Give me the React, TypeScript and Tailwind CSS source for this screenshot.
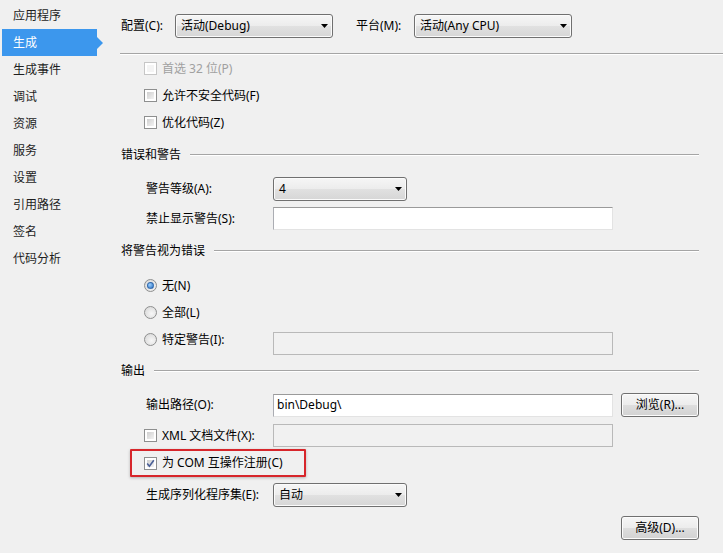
import React from "react";

const FONT = '"Noto Sans", "Noto Sans CJK SC", sans-serif';

const navItems = ["应用程序", "生成", "生成事件", "调试", "资源", "服务", "设置", "引用路径", "签名", "代码分析"];

function Arrow() {
  return (
    <svg width="7" height="4" viewBox="0 0 7 4" className="shrink-0">
      <polygon points="0,0 7,0 3.5,4" fill="#000" />
    </svg>
  );
}

function Select({ text, width }: { text: string; width: string }) {
  return (
    <div
      className={`${width} h-[24px] flex items-center justify-between pl-[5px] pr-[4px] border border-[#707070] rounded-[3px] bg-[linear-gradient(#f6f6f6,#ececec_50%,#e1e1e1_50%,#d6d6d6)] shadow-[inset_0_0_0_1px_#fbfbfb]`}
    >
      <span className="leading-none">{text}</span>
      <Arrow />
    </div>
  );
}

function TextBox({ text, disabled }: { text?: string; disabled?: boolean }) {
  return (
    <div
      className={`w-[340px] h-[23px] flex items-center pl-[3px] border ${
        disabled ? "bg-[#f1f1f1] border-[#b9b9b9]" : "bg-white border-[#abadb3] border-t-[#9a9a9a] border-r-[#e3e3e3] border-b-[#e3e3e3]"
      }`}
    >
      {text && <span className="leading-none">{text}</span>}
    </div>
  );
}

function Button({ text }: { text: string }) {
  return (
    <div className="w-[78px] h-[24px] flex items-center justify-center border border-[#707070] rounded-[3px] bg-[linear-gradient(#f6f6f6,#ececec_50%,#dedede_50%,#d2d2d2)] shadow-[inset_0_0_0_1px_#fcfcfc]">
      <span className="leading-none">{text}</span>
    </div>
  );
}

function CheckBox({ checked, disabled }: { checked?: boolean; disabled?: boolean }) {
  return (
    <div
      className={`w-[13px] h-[13px] shrink-0 border p-[2px] bg-white ${
        disabled ? "border-[#c6c6c6]" : "border-[#8e8f8f]"
      }`}
    >
      <div
        className={`relative w-full h-full ${
          disabled ? "bg-[#f4f4f4]" : "bg-[linear-gradient(135deg,#cfcfcf,#f3f3f3)]"
        }`}
      >
        {checked && (
          <svg width="11" height="11" viewBox="0 0 11 11" className="absolute -left-[2px] -top-[2px]">
            <path d="M2.2 5.6 L4.4 8.2 L8.8 2.2" stroke="#4a5f97" strokeWidth="1.6" fill="none" />
          </svg>
        )}
      </div>
    </div>
  );
}

function Radio({ checked }: { checked?: boolean }) {
  return (
    <div className="w-[13px] h-[13px] shrink-0 rounded-full border border-[#8e8f8f] bg-[radial-gradient(circle_at_60%_60%,#f7f7f7,#d4d4d4)] flex items-center justify-center">
      {checked && (
        <div className="w-[7px] h-[7px] rounded-full bg-[radial-gradient(circle_at_35%_35%,#9cd0ff,#2a6fc0)] border border-[#1d4f8f]/60" />
      )}
    </div>
  );
}

function Header({ text }: { text: string }) {
  return (
    <div className="w-[578px] h-[28px] flex items-center gap-[9px]">
      <span className="leading-none">{text}</span>
      <div className="flex-1 h-[2px] border-t border-t-[#a5a5a5] border-b border-b-white" />
    </div>
  );
}

function CheckRow({ text, checked, disabled }: { text: string; checked?: boolean; disabled?: boolean }) {
  return (
    <div className="h-[27px] pl-[23px] flex items-center gap-[5px]">
      <CheckBox checked={checked} disabled={disabled} />
      <span className={`leading-none ${disabled ? "text-[#a0a0a0]" : ""}`}>{text}</span>
    </div>
  );
}

function RadioLabel({ text, checked }: { text: string; checked?: boolean }) {
  return (
    <div className="h-[27px] flex items-center gap-[5px]">
      <Radio checked={checked} />
      <span className="leading-none">{text}</span>
    </div>
  );
}

export default function App() {
  return (
    <div
      className="w-[723px] h-[553px] bg-[#f0f0f0] text-[12px] text-black flex overflow-hidden"
      style={{ fontFamily: FONT }}
    >
      {/* navigation tabs */}
      <div className="w-[103px] shrink-0 pt-[2px] flex flex-col">
        {navItems.map((item) =>
          item === "生成" ? (
            <div key={item} className="h-[27px] flex items-center">
              <div className="ml-[2px] w-[95px] h-[27px] bg-[#3c97ed] text-white flex items-center pl-[11px]">
                <span className="leading-none">{item}</span>
              </div>
              <svg width="6" height="12" viewBox="0 0 6 12">
                <polygon points="0,0 6,6 0,12" fill="#3c97ed" />
              </svg>
            </div>
          ) : (
            <div key={item} className="h-[27px] flex items-center pl-[13px] text-[#1e1e1e]">
              <span className="leading-none">{item}</span>
            </div>
          )
        )}
      </div>

      {/* build settings */}
      <div className="flex-1 pl-[18px] flex flex-col">
        <div className="mt-[14px] h-[24px] flex items-center">
          <span className="w-[54px] leading-none">配置(C):</span>
          <Select text="活动(Debug)" width="w-[158px]" />
          <span className="ml-[23px] w-[58px] leading-none">平台(M):</span>
          <Select text="活动(Any CPU)" width="w-[158px]" />
        </div>

        <div className="mt-[15px] -ml-[1px] h-[2px] border-t border-t-[#a5a5a5] border-b border-b-white" />

        <CheckRow text="首选 32 位(P)" disabled />
        <CheckRow text="允许不安全代码(F)" />
        <CheckRow text="优化代码(Z)" />

        <div className="mt-[5px]">
          <Header text="错误和警告" />
        </div>

        <div className="mt-[8px] h-[24px] pl-[25px] flex items-center">
          <span className="w-[127px] leading-none">警告等级(A):</span>
          <Select text="4" width="w-[134px]" />
        </div>
        <div className="mt-[6px] h-[23px] pl-[25px] flex items-center">
          <span className="w-[127px] leading-none">禁止显示警告(S):</span>
          <TextBox />
        </div>

        <div className="mt-[7px]">
          <Header text="将警告视为错误" />
        </div>

        <div className="mt-[7px] pl-[23px] flex flex-col">
          <RadioLabel text="无(N)" checked />
          <RadioLabel text="全部(L)" />
          <div className="flex items-start h-[28px]">
            <div className="w-[129px]">
              <RadioLabel text="特定警告(I):" />
            </div>
            <div className="mt-[6px]">
              <TextBox disabled />
            </div>
          </div>
        </div>

        <div className="mt-[3px]">
          <Header text="输出" />
        </div>

        <div className="mt-[8px] h-[24px] pl-[25px] flex items-center">
          <span className="w-[127px] leading-none">输出路径(O):</span>
          <TextBox text={"bin\\Debug\\"} />
          <div className="ml-[8px]">
            <Button text="浏览(R)..." />
          </div>
        </div>

        <div className="mt-[7px] h-[23px] pl-[23px] flex items-center">
          <div className="w-[129px] flex items-center gap-[5px]">
            <CheckBox />
            <span className="leading-none">XML 文档文件(X):</span>
          </div>
          <TextBox disabled />
        </div>

        <div className="mt-[2px] ml-[9px] w-[176px] h-[28px] border-2 border-[#d7262b] rounded-[1px] shadow-[0_1px_3px_rgba(0,0,0,0.25)] flex items-center pl-[12px] gap-[5px]">
          <CheckBox checked />
          <span className="leading-none">为 COM 互操作注册(C)</span>
        </div>

        <div className="mt-[6px] h-[24px] pl-[25px] flex items-center">
          <span className="w-[127px] leading-none">生成序列化程序集(E):</span>
          <Select text="自动" width="w-[134px]" />
        </div>

        <div className="mt-[9px] w-[578px] flex justify-end">
          <Button text="高级(D)..." />
        </div>
      </div>
    </div>
  );
}
